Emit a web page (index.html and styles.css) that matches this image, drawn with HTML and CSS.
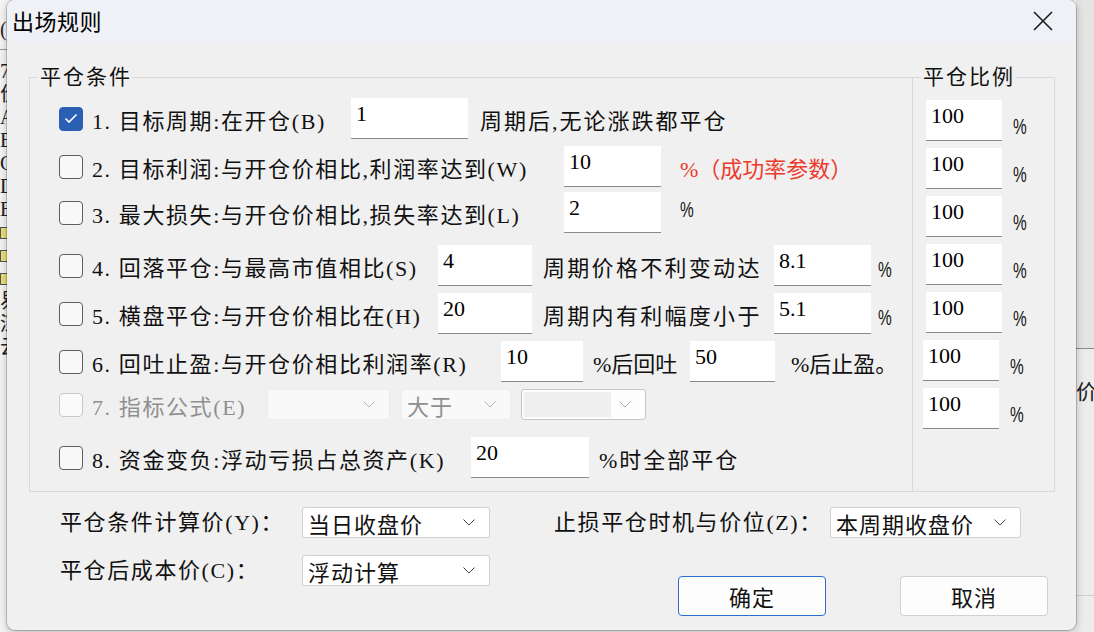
FILE: index.html
```html
<!DOCTYPE html>
<html lang="zh-CN">
<head>
  <meta charset="UTF-8" />
  <title>出场规则</title>
  <link rel="stylesheet" href="styles.css">
</head>
<body>
  <div class="desktop">

    <!-- ventana de fondo (solo se ve el borde) -->
    <div class="bg-left">
      <div class="bg-top">(</div>
      <div class="bg-list">
        <div>7</div>
        <div>价</div>
        <div>A.</div>
        <div>B.</div>
        <div>C.</div>
        <div>D.</div>
        <div>E.</div>
        <div><span class="bg-icon"></span></div>
        <div><span class="bg-icon"></span></div>
        <div><span class="bg-icon"></span></div>
        <div>易</div>
        <div>深</div>
        <div>云</div>
      </div>
    </div>
    <div class="bg-right">
      <div class="bg-right-top"></div>
      <div class="bg-right-low">价格</div>
    </div>

    <!-- dialogo -->
    <div class="dialog">
      <div class="titlebar">
        <span class="title">出场规则</span>
        <svg class="close" width="20" height="20" viewBox="0 0 20 20">
          <path d="M1 1 L19 19 M19 1 L1 19" stroke="#1b1b1b" stroke-width="1.6" fill="none"/>
        </svg>
      </div>

      <div class="dlg-body">
        <div class="groups">
          <fieldset class="grp grp-cond">
            <legend>平仓条件</legend>
            <div class="cond-list">

              <div class="row row-b">
                <span class="chk checked">
                  <svg width="14" height="11" viewBox="0 0 14 11"><path d="M1.5 5.5 L5 9 L12.5 1.5" stroke="#fff" stroke-width="1.6" fill="none"/></svg>
                </span>
                <span class="lbl">1. 目标周期:在开仓(B)</span>
                <span class="field">1</span>
                <span class="txt">周期后,无论涨跌都平仓</span>
              </div>

              <div class="row row-w">
                <span class="chk"></span>
                <span class="lbl">2. 目标利润:与开仓价相比,利润率达到(W)</span>
                <span class="field">10</span>
                <span class="txt note">%（成功率参数）</span>
              </div>

              <div class="row row-l">
                <span class="chk"></span>
                <span class="lbl">3. 最大损失:与开仓价相比,损失率达到(L)</span>
                <span class="field">2</span>
                <span class="txt pct">%</span>
              </div>

              <div class="row row-s">
                <span class="chk"></span>
                <span class="lbl">4. 回落平仓:与最高市值相比(S)</span>
                <span class="field f-a">4</span>
                <span class="txt mid">周期价格不利变动达</span>
                <span class="field f-b">8.1</span>
                <span class="pct low">%</span>
              </div>

              <div class="row row-h">
                <span class="chk"></span>
                <span class="lbl">5. 横盘平仓:与开仓价相比在(H)</span>
                <span class="field f-a">20</span>
                <span class="txt mid">周期内有利幅度小于</span>
                <span class="field f-b">5.1</span>
                <span class="pct low">%</span>
              </div>

              <div class="row row-r">
                <span class="chk"></span>
                <span class="lbl">6. 回吐止盈:与开仓价相比利润率(R)</span>
                <span class="field f-a">10</span>
                <span class="txt mid">%后回吐</span>
                <span class="field f-b">50</span>
                <span class="txt tail">%后止盈。</span>
              </div>

              <div class="row row-e">
                <span class="chk disabled"></span>
                <span class="lbl">7. 指标公式(E)</span>
                <span class="combo off c-1">
                  <span></span>
                  <svg width="12" height="7" viewBox="0 0 12 7"><path d="M0.5 0.5 L6 6 L11.5 0.5" stroke="#b4b4b4" fill="none"/></svg>
                </span>
                <span class="combo off c-2">
                  <span>大于</span>
                  <svg width="12" height="7" viewBox="0 0 12 7"><path d="M0.5 0.5 L6 6 L11.5 0.5" stroke="#b4b4b4" fill="none"/></svg>
                </span>
                <span class="combo c-3">
                  <span class="combo-blank"></span>
                  <svg width="12" height="7" viewBox="0 0 12 7"><path d="M0.5 0.5 L6 6 L11.5 0.5" stroke="#a8a8a8" fill="none"/></svg>
                </span>
              </div>

              <div class="row row-k">
                <span class="chk"></span>
                <span class="lbl">8. 资金变负:浮动亏损占总资产(K)</span>
                <span class="field">20</span>
                <span class="txt">%时全部平仓</span>
              </div>

            </div>
          </fieldset>

          <fieldset class="grp grp-ratio">
            <legend>平仓比例</legend>
            <div class="ratio-list">
              <div class="ratio"><span class="field">100</span><span class="pct low">%</span></div>
              <div class="ratio"><span class="field">100</span><span class="pct low">%</span></div>
              <div class="ratio"><span class="field">100</span><span class="pct low">%</span></div>
              <div class="ratio"><span class="field">100</span><span class="pct low">%</span></div>
              <div class="ratio"><span class="field">100</span><span class="pct low">%</span></div>
              <div class="ratio shift"><span class="field">100</span><span class="pct low">%</span></div>
              <div class="ratio shift"><span class="field">100</span><span class="pct low">%</span></div>
            </div>
          </fieldset>
        </div>

        <div class="bottom">
          <span class="b-lbl">平仓条件计算价(Y)：</span>
          <span class="combo">
            <span>当日收盘价</span>
            <svg width="12" height="7" viewBox="0 0 12 7"><path d="M0.5 0.5 L6 6 L11.5 0.5" stroke="#444" fill="none"/></svg>
          </span>
          <span></span>
          <span class="b-lbl">止损平仓时机与价位(Z)：</span>
          <span class="combo">
            <span>本周期收盘价</span>
            <svg width="12" height="7" viewBox="0 0 12 7"><path d="M0.5 0.5 L6 6 L11.5 0.5" stroke="#444" fill="none"/></svg>
          </span>

          <span class="b-lbl">平仓后成本价(C)：</span>
          <span class="combo">
            <span>浮动计算</span>
            <svg width="12" height="7" viewBox="0 0 12 7"><path d="M0.5 0.5 L6 6 L11.5 0.5" stroke="#444" fill="none"/></svg>
          </span>
          <span></span>
          <div class="actions">
            <button class="btn btn-ok">确定</button>
            <button class="btn">取消</button>
          </div>
        </div>
      </div>
    </div>

  </div>
</body>
</html>
```

FILE: styles.css
```css
/* Base */
body {
  margin: 0;
  font-family: "Liberation Serif", "Noto Sans CJK SC", serif;
  color: #111;
}

.desktop {
  position: relative;
  width: 1094px;
  height: 632px;
  overflow: hidden;
  background: #f0f0f0;
  display: flex;
  justify-content: space-between;
}

/* Ventana de fondo */
.bg-left {
  width: 7px;
  overflow: hidden;
  background: #f4f4f4;
  font-size: 20px;
  line-height: 23px;
  color: #222;
}

.bg-top {
  height: 50px;
  padding-top: 18px;
  box-sizing: border-box;
  border-bottom: 1px solid #9a9a9a;
}

.bg-list {
  padding-top: 10px;
}

.bg-icon {
  display: inline-block;
  width: 16px;
  height: 10px;
  background: #e8e07a;
  border: 1px solid #555;
}

.bg-right {
  width: 18px;
  display: flex;
  flex-direction: column;
  background: #ececec;
}

.bg-right-top {
  height: 348px;
  background: #e4e4e4;
  border-bottom: 1px solid #8c8c8c;
}

.bg-right-low {
  padding-top: 26px;
  font-size: 21px;
  white-space: nowrap;
  overflow: hidden;
  color: #222;
  height: 220px;
  border-bottom: 1px solid #cfcfcf;
}

/* Dialogo */
.dialog {
  position: absolute;
  left: 7px;
  top: 0;
  width: 1069px;
  height: 630px;
  background: #f0f0f0;
  border-radius: 8px;
  overflow: hidden;
  box-shadow: 0 0 0 1px rgba(0, 0, 0, 0.18), 0 2px 8px rgba(0, 0, 0, 0.25);
}

.titlebar {
  height: 43px;
  background: #eff1f6;
  display: flex;
  align-items: center;
  justify-content: space-between;
  padding: 0 23px 4px 5px;
  box-sizing: border-box;
}

.title {
  font-family: "Noto Sans CJK SC", sans-serif;
  font-size: 22px;
  letter-spacing: 0.5px;
  color: #000;
}

.close {
  margin-top: 3px;
}

.dlg-body {
  padding: 22px 0 0 22px;
}

/* Grupos */
.groups {
  display: flex;
}

.grp {
  margin: 0;
  padding: 0;
  min-width: 0;
  border: 1px solid #d9d9d9;
  height: 427px;
  box-sizing: border-box;
}

.grp legend {
  font-size: 21px;
  line-height: 24px;
  letter-spacing: 2px;
  padding: 0 0 0 2px;
  margin-left: 8px;
  color: #111;
}

.grp-cond {
  width: 883px;
  border-right: none;
}

.grp-ratio {
  width: 143px;
}

.cond-list {
  padding-top: 9px;
  display: flex;
  flex-direction: column;
  gap: 7px;
}

.row {
  display: flex;
  align-items: center;
  height: 41px;
  padding-left: 29px;
  font-size: 22px;
  white-space: nowrap;
}

.row-l { margin-top: -2px; }
.row-s { margin-top: 5px; }
.row-e { margin-top: -5px; }
.row-k { margin-top: 5px; }

/* Casillas */
.chk {
  flex: none;
  width: 24px;
  height: 24px;
  box-sizing: border-box;
  border: 1.5px solid #5e5e5e;
  border-radius: 4px;
  background: #f8f8f8;
  margin-right: 9px;
  display: flex;
  align-items: center;
  justify-content: center;
}

.chk.checked {
  background: #2b5fb3;
  border-color: #2b5fb3;
}

.chk.disabled {
  border-color: #c9c9c9;
  background: #fafafa;
}

.lbl {
  flex: none;
  overflow: hidden;
  letter-spacing: 1.6px;
}

.row-b .lbl { width: 259px; }
.row-w .lbl, .row-l .lbl { width: 472px; }
.row-s .lbl, .row-h .lbl { width: 346px; }
.row-r .lbl { width: 409px; }
.row-e .lbl { width: 175px; color: #8f8f8f; }
.row-k .lbl { width: 379px; }

/* Campos de texto */
.field {
  flex: none;
  display: block;
  height: 41px;
  box-sizing: border-box;
  background: #fff;
  border-bottom: 1px solid #8a8a8a;
  padding: 4px 0 0 5px;
  font-family: "Liberation Serif", serif;
  font-size: 22px;
  line-height: 24px;
  color: #000;
}

.row-b .field { width: 117px; }
.row-w .field, .row-l .field { width: 97px; }
.row-s .f-a, .row-h .f-a { width: 94px; }
.row-s .f-b, .row-h .f-b { width: 97px; }
.row-r .f-a { width: 82px; }
.row-r .f-b { width: 85px; }
.row-k .field { width: 118px; }

.txt {
  margin-left: 12px;
  letter-spacing: 2px;
}

.row-w .txt, .row-l .txt { margin-left: 19px; }
.row-k .txt { margin-left: 10px; }

.txt.mid {
  flex: none;
  margin-left: 11px;
  width: 231px;
  letter-spacing: 2.3px;
}

.row-r .txt.mid {
  margin-left: 10px;
  width: 97px;
  letter-spacing: 0;
}

.txt.tail {
  margin-left: 16px;
  letter-spacing: 0;
}

.note {
  color: #ec3a2d;
  letter-spacing: 0;
}

.pct {
  font-size: 22px;
  font-family: "Liberation Sans", sans-serif;
  transform: scaleX(0.7);
  transform-origin: left center;
}

.row-l .pct {
  margin-bottom: 6px;
}

.pct.low {
  align-self: flex-end;
  margin-bottom: 5px;
  margin-left: 7px;
  line-height: 22px;
}

/* Combos */
.combo {
  flex: none;
  display: flex;
  align-items: center;
  justify-content: space-between;
  height: 31px;
  box-sizing: border-box;
  background: #fff;
  border: 1px solid #d0d0d0;
  border-radius: 3px;
  padding: 0 14px 0 5px;
  font-size: 22px;
  letter-spacing: 1px;
  color: #111;
}

.combo.off {
  background: #f9f9f9;
  border-color: #ededed;
  color: #8f8f8f;
}

.c-1 { width: 123px; }
.c-2 { width: 110px; margin-left: 11px; }
.c-3 {
  width: 125px;
  margin-left: 10px;
  border-color: #c6c6c6;
  background: #fdfdfd;
  padding-left: 2px;
}

.combo-blank {
  width: 87px;
  height: 25px;
  background: #efefef;
}

/* Columna de proporcion */
.ratio-list {
  padding-top: 11px;
  display: flex;
  flex-direction: column;
  gap: 7px;
}

.ratio {
  display: flex;
  height: 41px;
  padding-left: 13px;
}

.ratio.shift {
  padding-left: 10px;
}

.ratio .field {
  width: 76px;
}

.ratio .pct.low {
  margin-left: 11px;
  margin-bottom: 3px;
}

/* Parte inferior */
.bottom {
  display: grid;
  grid-template-columns: 242px 188px 64px 276px 191px;
  row-gap: 17px;
  align-items: start;
  margin: 15px 0 0 31px;
  font-size: 22px;
  white-space: nowrap;
}

.b-lbl {
  line-height: 31px;
  letter-spacing: 1.6px;
}

.actions {
  grid-column: 4 / 6;
  display: flex;
  gap: 74px;
  margin: 21px 0 0 124px;
}

.btn {
  flex: none;
  width: 148px;
  height: 40px;
  border: 1px solid #d0d0d0;
  border-radius: 4px;
  background: #fdfdfd;
  font-family: "Liberation Serif", "Noto Sans CJK SC", serif;
  font-size: 22px;
  letter-spacing: 1px;
  color: #111;
}

.btn-ok {
  border-color: #2d6fc8;
}
```
